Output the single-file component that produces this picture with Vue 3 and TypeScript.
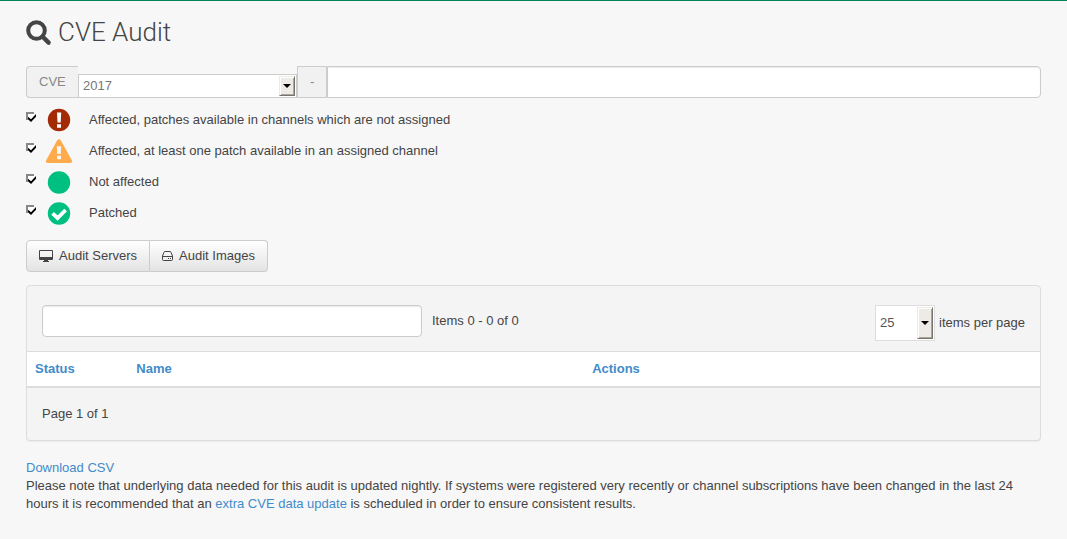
<script setup lang="ts">
import { ref } from 'vue'

type StatusIcon = 'alert' | 'warning' | 'clear' | 'patched'

interface StatusFilter {
  id: StatusIcon
  label: string
  checked: boolean
}

const year = ref('2017')
const cveId = ref('')
const search = ref('')
const pageSize = ref('25')
const years = ['2017', '2016', '2015', '2014']
const sizes = ['25', '50', '100']
const columns = ['Status', 'Name', 'Actions']

const filters = ref<StatusFilter[]>([
  { id: 'alert', label: 'Affected, patches available in channels which are not assigned', checked: true },
  { id: 'warning', label: 'Affected, at least one patch available in an assigned channel', checked: true },
  { id: 'clear', label: 'Not affected', checked: true },
  { id: 'patched', label: 'Patched', checked: true },
])
</script>

<template>
  <main class="page">
    <h1 class="title">
      <svg class="title-icon" viewBox="0 0 26 26" aria-hidden="true">
        <circle cx="10.5" cy="10.5" r="8.3" fill="none" stroke="currentColor" stroke-width="4" />
        <path d="M16.5 16.5L22.6 22.6" stroke="currentColor" stroke-width="4.4" stroke-linecap="round" />
      </svg>
      <span>CVE Audit</span>
    </h1>

    <div class="cve-group">
      <label class="addon addon-first" for="cve-year">CVE</label>
      <span class="select-wrap year-wrap">
        <select id="cve-year" v-model="year">
          <option v-for="y in years" :key="y">{{ y }}</option>
        </select>
        <span class="drop" aria-hidden="true"></span>
      </span>
      <span class="addon addon-dash">-</span>
      <input v-model="cveId" class="field cve-field" type="text" aria-label="CVE identifier" />
    </div>

    <div class="filters">
      <div v-for="f in filters" :key="f.id" class="filter">
        <input :id="f.id" v-model="f.checked" class="tick" type="checkbox" />
        <label class="filter-label" :for="f.id">
          <svg class="status-icon" viewBox="0 0 26 24" aria-hidden="true">
            <template v-if="f.id === 'alert'">
              <circle cx="13" cy="12" r="11.2" fill="#a32a05" />
              <path d="M11 4.5h4.2l-.5 10h-3.2zM11 16.2h4v3.6h-4z" fill="#fff" />
            </template>
            <template v-else-if="f.id === 'warning'">
              <path d="M13 0.2Q14.2 0.2 14.9 1.4L25.8 21.2Q26.7 23.8 24.1 24H1.9Q-.7 23.8 .2 21.2L11.1 1.4Q11.8 .2 13 .2z" fill="#ffab4b" />
              <path d="M10.8 7.2h4.4l-.5 7.8h-3.4zM11.1 16.8h3.9v3.5h-3.9z" fill="#f7f7f7" />
            </template>
            <template v-else>
              <circle cx="13" cy="12.5" r="11.2" fill="#00c081" />
              <path v-if="f.id === 'patched'" d="M6.6 12.4L11.6 17L19.6 9" fill="none" stroke="#fff" stroke-width="3.8" />
            </template>
          </svg>
          <span>{{ f.label }}</span>
        </label>
      </div>
    </div>

    <div class="actions">
      <button class="btn" type="button">
        <svg class="monitor" viewBox="0 0 14 12" aria-hidden="true">
          <path fill-rule="evenodd" d="M1 0H13Q14 0 14 1V9Q14 10 13 10H9V11H10V12H4V11H5V10H1Q0 10 0 9V1Q0 0 1 0zM1 1V7H13V1z" fill="currentColor" />
        </svg>
        <span>Audit Servers</span>
      </button>
      <button class="btn" type="button">
        <svg class="disk" viewBox="0 0 11 10" aria-hidden="true">
          <path d="M.5 5L2 1.3Q2.3.5 3 .5H8Q8.7.5 9 1.3L10.5 5V8.5Q10.5 9.5 9.5 9.5H1.5Q.5 9.5 .5 8.5zM.5 5.5H10.5" fill="none" stroke="currentColor" />
          <path d="M6 7h1v1H6zM8 7h1v1H8z" fill="currentColor" />
        </svg>
        <span>Audit Images</span>
      </button>
    </div>

    <section class="panel">
      <div class="panel-head">
        <input v-model="search" class="field search" type="text" aria-label="Filter items" />
        <span class="count">Items 0 - 0 of 0</span>
        <span class="per-page">
          <span class="select-wrap size-wrap">
            <select id="page-size" v-model="pageSize">
              <option v-for="s in sizes" :key="s">{{ s }}</option>
            </select>
            <span class="drop" aria-hidden="true"></span>
          </span>
          <label for="page-size">items per page</label>
        </span>
      </div>
      <table class="table">
        <thead>
          <tr>
            <th v-for="c in columns" :key="c" scope="col"><a href="#">{{ c }}</a></th>
          </tr>
        </thead>
      </table>
      <div class="panel-foot">Page 1 of 1</div>
    </section>

    <a href="#">Download CSV</a>
    <p class="note">
      Please note that underlying data needed for this audit is updated nightly. If systems were registered very
      recently or channel subscriptions have been changed in the last 24 hours it is recommended that an
      <a href="#">extra CVE data update</a> is scheduled in order to ensure consistent results.
    </p>
  </main>
</template>

<style>
body {
  background: #f7f7f7;
}
</style>

<style scoped>
.page,
.page * {
  box-sizing: border-box;
}
.page {
  border-top: 1px solid #00855a;
  padding: 15px 26px 24px;
  color: #444;
  font: 13px/18px "Liberation Sans", Arial, sans-serif;
}
a {
  color: #428bca;
  text-decoration: none;
}
.title {
  display: flex;
  align-items: center;
  gap: 6px;
  margin: 0 0 17px;
  font: 300 26px/33px Roboto, sans-serif;
}
.title-icon {
  width: 26px;
  height: 26px;
}
.cve-group {
  display: flex;
  align-items: flex-end;
  height: 32px;
}
.addon {
  height: 32px;
  padding: 6px 12px;
  border: 1px solid #ccc;
  background: #f1f1f1;
  color: #888;
}
.addon-first {
  width: 52px;
  border-right: 0;
  border-radius: 4px 0 0 4px;
}
.addon-dash {
  width: 30px;
}
.field {
  height: 32px;
  min-width: 0;
  padding: 6px 12px;
  border: 1px solid #ccc;
  border-radius: 4px;
  background: #fff;
  box-shadow: inset 0 1px 1px rgba(0, 0, 0, 0.08);
  color: inherit;
  font: inherit;
}
.cve-field {
  flex: 1;
  border-radius: 0 4px 4px 0;
}
.select-wrap {
  position: relative;
  display: flex;
  border: 1px solid #ccc;
  background: #fff;
}
.select-wrap select {
  width: 100%;
  padding: 0 18px 0 4px;
  appearance: none;
  border: 0;
  background: transparent;
  color: #777;
  font: inherit;
}
.drop {
  position: absolute;
  top: 1px;
  right: 1px;
  bottom: 1px;
  display: flex;
  align-items: center;
  justify-content: center;
  width: 16px;
  border: 1px solid;
  border-color: #eeebe7 #77736d #77736d #eeebe7;
  background: #eeebe7;
  box-shadow: inset 1px 1px #fff, inset -1px -1px #aaa69f;
  pointer-events: none;
}
.drop::after {
  content: "";
  border: 4px solid transparent;
  border-top-color: #000;
  border-bottom: 0;
}
.year-wrap {
  width: 219px;
  height: 24px;
}
.size-wrap {
  width: 60px;
  height: 36px;
  border-color: #ddd;
}
.size-wrap select {
  color: #555;
}
.filters {
  padding-top: 10px;
}
.filter {
  display: flex;
  align-items: flex-start;
  height: 31px;
}
.tick {
  width: 10px;
  height: 10px;
  margin: 4px 10px 0 0;
  appearance: none;
  background: linear-gradient(#888, #888) 0 0 / 8px 2px no-repeat,
    linear-gradient(#888, #888) 0 0 / 2px 8px no-repeat,
    linear-gradient(#fff, #fff) 2px 2px / 6px 6px no-repeat;
}
.tick:checked::after {
  content: "";
  display: block;
  width: 8px;
  height: 8px;
  margin: 2px 0 0 2px;
  background: #000;
  clip-path: polygon(0 35%, 38% 65%, 100% 0, 100% 35%, 38% 100%, 0 65%);
}
.filter-label {
  display: flex;
  gap: 17px;
}
.filter-label span {
  padding-top: 3px;
}
.status-icon {
  width: 26px;
  height: 24px;
}
.actions {
  display: flex;
  margin: 8px 0 13px;
}
.btn {
  display: flex;
  align-items: center;
  gap: 6px;
  height: 32px;
  padding: 0 12px;
  border: 1px solid #ccc;
  border-radius: 4px 0 0 4px;
  background: linear-gradient(#fff, #e3e3e3);
  color: #444;
  font: inherit;
}
.btn + .btn {
  border-left: 0;
  border-radius: 0 4px 4px 0;
}
.monitor {
  width: 14px;
  height: 12px;
}
.disk {
  width: 11px;
  height: 10px;
}
.panel {
  margin-bottom: 18px;
  border: 1px solid #ddd;
  border-radius: 4px;
  background: #f4f4f4;
  box-shadow: 0 1px 1px rgba(0, 0, 0, 0.05);
}
.panel-head {
  display: flex;
  align-items: center;
  height: 65px;
  padding: 4px 15px 0;
}
.search {
  width: 380px;
}
.count {
  margin-left: 10px;
}
.per-page {
  display: flex;
  align-items: center;
  gap: 4px;
  margin: 4px 0 0 auto;
}
.table {
  width: 100%;
  border-collapse: collapse;
  border-top: 1px solid #ddd;
  border-bottom: 2px solid #ddd;
  background: #fff;
  table-layout: fixed;
}
th {
  height: 35px;
  padding: 0 8px;
  text-align: left;
}
th:nth-child(1) {
  width: 10%;
}
th:nth-child(2) {
  width: 45%;
}
.panel-foot {
  padding: 17px 15px;
}
.note {
  margin: 0;
}
</style>
